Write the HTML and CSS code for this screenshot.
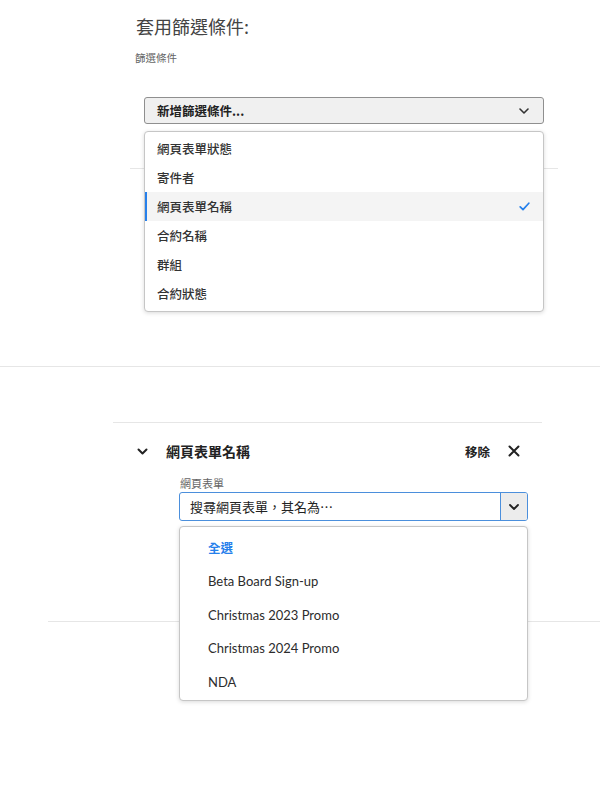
FILE: index.html
```html
<!DOCTYPE html>
<html lang="zh-Hant">
<head>
<meta charset="utf-8">
<link rel="stylesheet" href="styles.css">
</head>
<body>
<div class="page">
  <h1 class="title">套用篩選條件:</h1>
  <div class="label label-top">篩選條件</div>

  <div class="select-wrap">
    <div class="select">
      <span class="select-text">新增篩選條件...</span>
      <svg class="chev" width="10" height="6" viewBox="0 0 10 6"><path d="M1 1l4 4 4-4" fill="none" stroke="#333" stroke-width="1.6" stroke-linecap="round" stroke-linejoin="round"/></svg>
    </div>
    <ul class="menu menu-filters">
      <li class="item">網頁表單狀態</li>
      <li class="item">寄件者</li>
      <li class="item selected"><span>網頁表單名稱</span>
        <svg class="check" width="11" height="9" viewBox="0 0 11 9"><path d="M1.2 4.8l2.8 2.8 5.8-6.4" fill="none" stroke="#2680eb" stroke-width="1.7" stroke-linecap="round" stroke-linejoin="round"/></svg>
      </li>
      <li class="item">合約名稱</li>
      <li class="item">群組</li>
      <li class="item">合約狀態</li>
    </ul>
  </div>

  <div class="rule rule-1"></div>
  <div class="rule rule-2"></div>
  <div class="rule rule-3"></div>

  <div class="section-head">
    <svg class="sec-chev" width="11" height="7" viewBox="0 0 11 7"><path d="M1.5 1.5l4 4 4-4" fill="none" stroke="#222" stroke-width="2" stroke-linecap="round" stroke-linejoin="round"/></svg>
    <span class="sec-title">網頁表單名稱</span>
    <span class="remove">移除</span>
    <svg class="close" width="12" height="12" viewBox="0 0 12 12"><path d="M1.5 1.5l9 9M10.5 1.5l-9 9" fill="none" stroke="#222" stroke-width="2" stroke-linecap="round"/></svg>
  </div>

  <div class="label label-form">網頁表單</div>
  <div class="combo-wrap">
    <div class="combo">
      <span class="combo-text">搜尋網頁表單，其名為⋯</span>
      <span class="combo-btn">
        <svg width="10" height="6" viewBox="0 0 10 6"><path d="M1 1l4 4 4-4" fill="none" stroke="#222" stroke-width="1.8" stroke-linecap="round" stroke-linejoin="round"/></svg>
      </span>
    </div>
    <ul class="menu menu-forms">
      <li class="opt opt-all">全選</li>
      <li class="opt">Beta Board Sign-up</li>
      <li class="opt">Christmas 2023 Promo</li>
      <li class="opt">Christmas 2024 Promo</li>
      <li class="opt">NDA</li>
    </ul>
  </div>

  <div class="rule rule-4"></div>
</div>
</body>
</html>
```

FILE: styles.css
```css
* { box-sizing: border-box; }
html, body { margin: 0; padding: 0; background: #fff; }
body {
  font-family: "Noto Sans CJK TC", "Noto Sans", sans-serif;
  color: #2c2c2c;
}
.page { width: 600px; height: 800px; overflow: hidden; }

.title {
  margin: 0;
  padding: 14px 0 0 136px;
  font-size: 18px;
  line-height: 24px;
  font-weight: normal;
  color: #444;
}
.label {
  font-size: 10.5px;
  line-height: 14px;
  color: #666;
}
.label-top { margin: 13px 0 0 135px; }

.select-wrap {
  position: relative;
  margin: 32px 0 0 144px;
  width: 400px;
}
.select {
  height: 27px;
  background: #f0f0f0;
  border: 1px solid #8f8f8f;
  border-radius: 3px;
  display: flex;
  align-items: center;
  justify-content: space-between;
  padding: 0 14px 0 12px;
}
.select-text { font-size: 12.5px; font-weight: bold; color: #222; }

.menu {
  position: absolute;
  left: 0;
  right: 0;
  margin: 0;
  list-style: none;
  background: #fff;
  border: 1px solid #c6c6c6;
  border-radius: 4px;
  box-shadow: 0 1px 4px rgba(0,0,0,0.15);
  z-index: 2;
}
.menu-filters { top: 34px; padding: 2px 0 3px; }
.item {
  height: 29px;
  display: flex;
  align-items: center;
  justify-content: space-between;
  padding: 0 12px 0 10px;
  font-size: 12.5px;
  font-weight: 500;
  color: #333;
  border-left: 2px solid transparent;
}
.item.selected {
  background: #f4f4f4;
  border-left-color: #2680eb;
}
.check { margin-right: 1px; }

.rule { height: 1px; background: #e6e6e6; }
.rule-1 { margin: 44px 0 0 130px; width: 428px; }
.rule-2 { margin: 197px 0 0 0; width: 600px; }
.rule-3 { margin: 55px 0 0 113px; width: 429px; }
.rule-4 { margin: 100px 0 0 48px; width: 552px; }

.section-head {
  margin: 16px 0 0 137px;
  width: 383px;
  height: 24px;
  display: flex;
  align-items: center;
}
.sec-chev { margin-right: 18px; }
.sec-title { font-size: 14px; font-weight: bold; color: #222; flex: 1; }
.remove { font-size: 12.5px; font-weight: bold; color: #222; margin-right: 18px; }

.label-form { margin: 13px 0 0 180px; font-size: 11px; }

.combo-wrap {
  position: relative;
  margin: 2px 0 0 179px;
  width: 349px;
}
.combo {
  height: 29px;
  border: 1px solid #4b8fdc;
  border-radius: 3px;
  display: flex;
  align-items: stretch;
  overflow: hidden;
}
.combo-text {
  flex: 1;
  display: flex;
  align-items: center;
  padding-left: 10px;
  font-size: 13px;
  color: #222;
}
.combo-btn {
  width: 27px;
  background: #ececec;
  border-left: 1px solid #4b8fdc;
  display: flex;
  align-items: center;
  justify-content: center;
}
.menu-forms { top: 34px; padding: 4px 0 1px; }
.opt {
  height: 33.5px;
  display: flex;
  align-items: center;
  padding-left: 28px;
  font-family: "Lato", "Noto Sans CJK TC", sans-serif;
  font-size: 13px;
  color: #2c2c2c;
}
.opt-all {
  font-family: "Noto Sans CJK TC", sans-serif;
  font-size: 12.5px;
  font-weight: bold;
  color: #2680eb;
}
```
